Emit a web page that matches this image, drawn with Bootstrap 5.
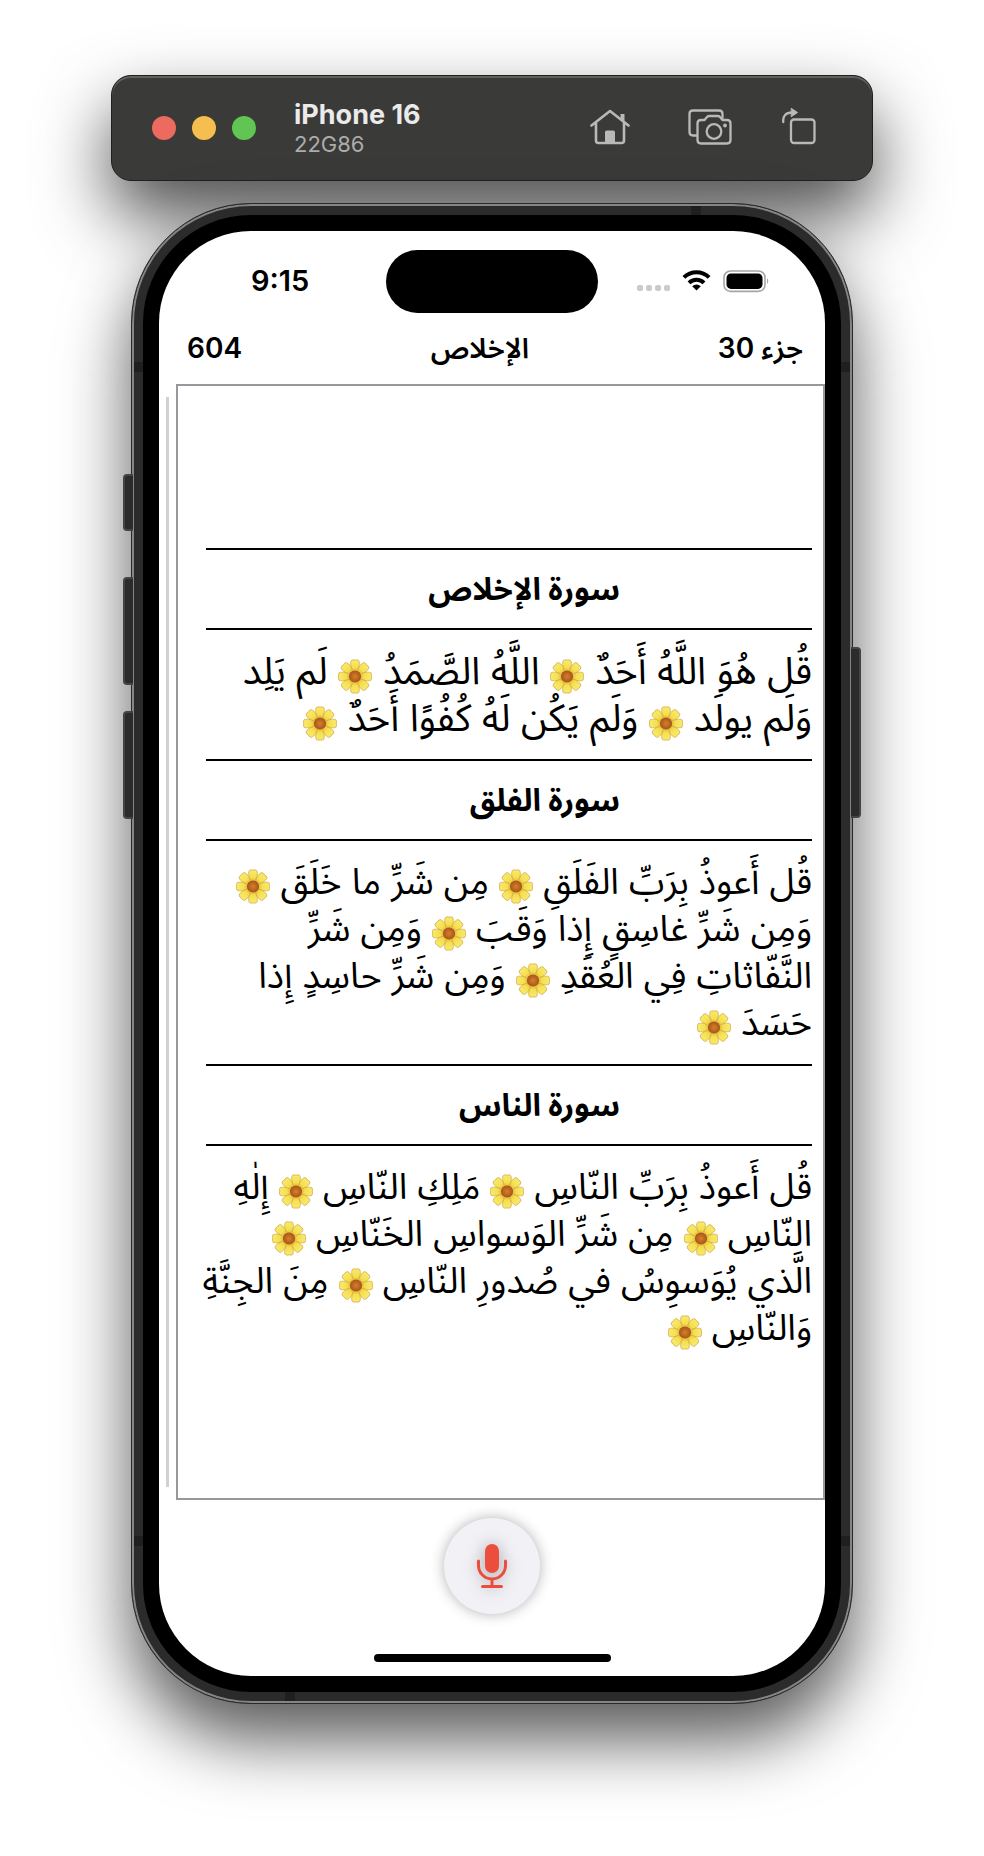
<!DOCTYPE html>
<html lang="ar">
<head>
<meta charset="utf-8">
<meta name="viewport" content="width=device-width, initial-scale=1">
<title>iPhone 16</title>
<link rel="stylesheet" href="https://cdn.jsdelivr.net/npm/bootstrap@5.3.0/dist/css/bootstrap.min.css">
<style>
body{background:#fff;color:#000;font-family:Inter,"Noto Sans Arabic","DejaVu Sans",sans-serif}
.stage{padding:75px 111px 152px;overflow:hidden}
.simbar{height:106px;border-radius:20px;background:#3a3a38;border:1px solid #1f1f1e;box-shadow:inset 0 2px 0 #60605c,0 34px 70px rgba(0,0,0,.7);padding:0 56px 0 40px}
.dot{width:24px;height:24px;border-radius:50%;border:0;padding:0}
.red{background:#ed6a5e}.amber{background:#f5bf4f}.green{background:#61c554}
.sim-title{margin-left:38px;padding-top:2px}
.sim-name{font-size:27px;line-height:30px;font-weight:700;color:#ebebeb;margin:0}
.sim-build{font-size:22px;line-height:28px;color:#acacaa}
.tools{padding-bottom:3px}
.tool{border:0;background:none;padding:0;color:#b9b9b7;line-height:0}
.tool-home{margin-right:58px}.tool-shot{margin-right:50px}
.phone{margin:22px 20px 0;position:relative;border-radius:120px;background:#2b2b2b;border:1px solid #2a2a2a;box-shadow:inset 0 0 0 2px #858585,0 36px 68px rgba(0,0,0,.65);padding:11px}
.bezel{background:#000;border-radius:108px;padding:16px}
.screen{background:#fff;border-radius:92px;overflow:hidden}
.key{position:absolute;width:10px;background:#2b2b2b;border:2px solid #444;border-radius:4px 0 0 4px;border-right:0;left:-9px}
.key-r{left:auto;right:-9px;border:2px solid #444;border-left:0;border-radius:0 4px 4px 0}
.band{position:absolute;background:#1f1f1f}
.band-h{width:9px;height:10px}.band-v{width:10px;height:9px}
.status{padding-top:19px}
.island{width:212px;height:63px;border-radius:32px;background:#000}
.clock,.info{font-size:28px;line-height:34px;font-weight:600}
.info{height:69px;margin-bottom:2px;padding:0 22px 0 28px}
.clock{font-size:29px;padding-bottom:2px}
.clock span{padding-left:92px}
.icons svg{margin-right:56px}
.scroller{width:3px;background:#d1d1d3;margin:13px 7px 13px;flex:none}
.mushaf{border:2px solid #98989c;min-width:0;min-height:1116px;padding:162px 11px 0 28px}
.surah{border:solid #000;border-width:2px 0;height:82px;padding-right:192px;margin:0;font-size:31px;line-height:40px;font-weight:700}
.ayat{font-size:36px;line-height:47px;padding:17px 0 18px;margin:0;white-space:nowrap}
.ayat-lg{font-size:38px}
.ayat svg{width:34px;height:35px;vertical-align:-10px}
.mic{width:96px;height:96px;border-radius:50%;background:#f2f1f6;border:0;padding:0;margin-top:18px;box-shadow:0 0 14px rgba(0,0,0,.3)}
.mic svg{filter:drop-shadow(0 0 8px rgba(0,0,0,.3))}
.homebar{width:237px;height:8px;border-radius:4px;background:#000;margin:40px auto 14px}
</style>
</head>
<body>
<svg width="0" height="0" class="position-absolute" aria-hidden="true">
<defs>
<radialGradient id="core"><stop offset="0" stop-color="#d4802a"/><stop offset="1" stop-color="#a85418"/></radialGradient>
<radialGradient id="leaf" gradientUnits="userSpaceOnUse" cx="0" cy="0" r="17"><stop offset=".3" stop-color="#e3b637"/><stop offset=".55" stop-color="#f5df4c"/><stop offset="1" stop-color="#f8ea70"/></radialGradient>
<path id="petal" d="M0-3C-4-8-5.500-13-3.800-16.500Q-1.800-17.800 0-16.800Q1.800-17.800 3.800-16.500C5.500-13 4-8 0-3Z" fill="url(#leaf)" stroke="#d0a236" stroke-width=".7"/>
<symbol id="flower" viewBox="-17.500 -18 35 36">
<use href="#petal"/><use href="#petal" transform="rotate(45)"/><use href="#petal" transform="rotate(90)"/><use href="#petal" transform="rotate(135)"/><use href="#petal" transform="rotate(180)"/><use href="#petal" transform="rotate(225)"/><use href="#petal" transform="rotate(270)"/><use href="#petal" transform="rotate(315)"/>
<circle r="6.300" fill="url(#core)"/>
</symbol>
</defs>
</svg>
<main class="stage">
<header class="simbar d-flex align-items-center" dir="ltr">
<div class="d-flex gap-3">
<button class="dot red" aria-label="Close"></button><button class="dot amber" aria-label="Minimize"></button><button class="dot green" aria-label="Zoom"></button>
</div>
<div class="sim-title me-auto"><h1 class="sim-name">iPhone 16</h1><div class="sim-build">22G86</div></div>
<div class="tools d-flex align-items-center">
<button class="tool tool-home" aria-label="Home"><svg width="40" height="36" viewBox="0 0 40 36" fill="none" stroke="currentColor" stroke-width="2.600" stroke-linecap="round" stroke-linejoin="round"><path d="M1.500 16.500 20 2l18.500 14.500M6 14v17.500q0 2.500 2.500 2.500h23q2.500 0 2.500-2.500V14"/><path d="M32.500 5v7" stroke-width="4" stroke-linecap="butt"/><path d="M15.500 34V23q0-1 1-1h7q1 0 1 1v11z" fill="currentColor" stroke-width="1"/></svg></button>
<button class="tool tool-shot" aria-label="Screenshot"><svg width="44" height="36" viewBox="0 0 44 36" fill="none" stroke="currentColor" stroke-width="2.300" stroke-linecap="round" stroke-linejoin="round"><path d="M8.500 26.500H5Q1.500 26.500 1.500 23V5Q1.500 1.500 5 1.500h26Q34.500 1.500 34.500 5v4"/><path d="M13 11h3.500l2.500-3q1-1 2.500-1h8q1.500 0 2.500 1l2.500 3H39q3.500 0 3.500 3.500V31q0 3.500-3.500 3.500H13Q9.500 34.500 9.500 31V14.500Q9.500 11 13 11Z"/><circle cx="26" cy="22.500" r="7.300"/><circle cx="37" cy="16.500" r="1.900" fill="currentColor" stroke="none"/></svg></button>
<button class="tool" aria-label="Rotate"><svg width="34" height="40" viewBox="0 0 34 40" fill="none" stroke="currentColor" stroke-width="2.300" stroke-linecap="round"><rect x="9" y="12.500" width="23.500" height="23.500" rx="3"/><path d="M1.300 15C.500 9 4 5.500 10 5.500"/><path d="M9.500 1.500 15.500 5.500 9.500 9.500Z" fill="currentColor" stroke-width="1"/></svg></button>
</div>
</header>
<section class="phone" dir="ltr">
<i class="key" style="top:270px;height:57px"></i><i class="key" style="top:373px;height:108px"></i><i class="key" style="top:507px;height:108px"></i><i class="key key-r" style="top:443px;height:171px"></i>
<i class="band band-v" style="top:2px;right:151px"></i><i class="band band-v" style="bottom:2px;left:153px"></i>
<i class="band band-h" style="top:158px;left:2px"></i><i class="band band-h" style="top:158px;right:2px"></i><i class="band band-h" style="bottom:157px;left:2px"></i><i class="band band-h" style="bottom:157px;right:2px"></i>
<div class="bezel position-relative"><div class="screen d-flex flex-column">
<div class="status d-flex align-items-center">
<div class="clock col"><span>9:15</span></div>
<div class="island"></div>
<div class="icons col d-flex justify-content-end align-items-center">
<svg class="flex-shrink-0" width="132" height="24" viewBox="0 0 132 24"><g fill="#cbcbcb"><rect y="15" width="6" height="6" rx="2"/><rect x="9" y="15" width="6" height="6" rx="2"/><rect x="18" y="15" width="6" height="6" rx="2"/><rect x="27" y="15" width="6" height="6" rx="2"/></g>
<g transform="translate(59.500 20)" fill="none" stroke="#000" stroke-width="4"><path d="M-12.600-12.600A17.800 17.800 0 0 1 12.600-12.600"/><path d="M-7.500-7.200A10.500 10.500 0 0 1 7.500-7.200"/><path d="M0 .5-4.300-3.800A6 6 0 0 1 4.300-3.800Z" fill="#000" stroke="none"/></g>
<rect x="87" y="1" width="41" height="20.400" rx="6.500" fill="none" stroke="#a5a5a5" stroke-width="1.600"/><rect x="89.500" y="3.500" width="36" height="15.400" rx="4.500"/><path d="M130 8q2.500 3 0 6z" fill="#a5a5a5"/></svg>
</div>
</div>
<div class="info d-flex align-items-center justify-content-between"><span>604</span><span dir="rtl" lang="ar">الإخلاص</span><span dir="rtl">جزء 30</span></div>
<div class="d-flex">
<div class="scroller"></div>
<article class="mushaf flex-grow-1" dir="rtl">
<h2 class="surah d-flex align-items-center">سورة الإخلاص</h2>
<p class="ayat ayat-lg">قُل هُوَ اللَّهُ أَحَدٌ <svg><use href="#flower"/></svg> اللَّهُ الصَّمَدُ <svg><use href="#flower"/></svg> لَم يَلِد<br>وَلَم يولَد <svg><use href="#flower"/></svg> وَلَم يَكُن لَهُ كُفُوًا أَحَدٌ <svg><use href="#flower"/></svg></p>
<h2 class="surah d-flex align-items-center">سورة الفلق</h2>
<p class="ayat">قُل أَعوذُ بِرَبِّ الفَلَقِ <svg><use href="#flower"/></svg> مِن شَرِّ ما خَلَقَ <svg><use href="#flower"/></svg><br>وَمِن شَرِّ غاسِقٍ إِذا وَقَبَ <svg><use href="#flower"/></svg> وَمِن شَرِّ<br>النَّفّاثاتِ فِي العُقَدِ <svg><use href="#flower"/></svg> وَمِن شَرِّ حاسِدٍ إِذا<br>حَسَدَ <svg><use href="#flower"/></svg></p>
<h2 class="surah d-flex align-items-center">سورة الناس</h2>
<p class="ayat">قُل أَعوذُ بِرَبِّ النّاسِ <svg><use href="#flower"/></svg> مَلِكِ النّاسِ <svg><use href="#flower"/></svg> إِلٰهِ<br>النّاسِ <svg><use href="#flower"/></svg> مِن شَرِّ الوَسواسِ الخَنّاسِ <svg><use href="#flower"/></svg><br>الَّذي يُوَسوِسُ في صُدورِ النّاسِ <svg><use href="#flower"/></svg> مِنَ الجِنَّةِ<br>وَالنّاسِ <svg><use href="#flower"/></svg></p>
</article>
</div>
<button class="mic align-self-center" aria-label="Record"><svg width="32" height="46" viewBox="0 0 32 46" fill="none" stroke="#eb4e3d" stroke-width="3" stroke-linecap="round"><rect x="9" y="1" width="14" height="29" rx="7" fill="#eb4e3d" stroke="none"/><path d="M2.500 18v4.500a13.500 13.500 0 0 0 27 0V18M16 36v7.500M6.500 43.500h19"/></svg></button>
<div class="homebar"></div>
</div></div>
</section>
</main>
<script src="https://cdn.jsdelivr.net/npm/bootstrap@5.3.0/dist/js/bootstrap.bundle.min.js"></script>
</body>
</html>
